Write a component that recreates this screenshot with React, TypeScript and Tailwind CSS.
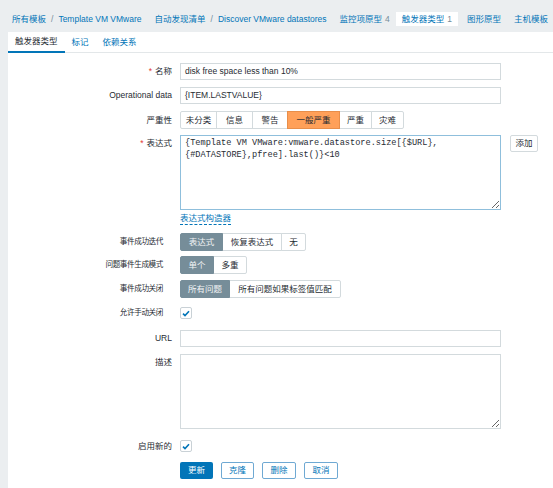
import React from 'react';

const FONT = { fontFamily: '"Liberation Sans", Arial, "Noto Sans CJK SC", sans-serif' };

const Check = () => (
  <div className="w-[12px] h-[12px] border border-[#c9d1d6] rounded-[2px] bg-white flex items-center justify-center">
    <svg width="8" height="7" viewBox="0 0 8 7">
      <path d="M1 3.6 L3 5.6 L7 1.2" fill="none" stroke="#0275b8" strokeWidth="1.6" />
    </svg>
  </div>
);

interface Seg {
  label: string;
  w: string;
}

const Segmented = ({ items, active, orange }: { items: Seg[]; active: number; orange?: boolean }) => (
  <div className="flex h-[18px]">
    {items.map((it, i) => {
      const on = i === active;
      let cls = 'bg-white text-[#1f2c33] border-[#d3dadd]';
      if (on && orange) cls = 'bg-[#ffa059] text-[#1f2c33] border-[#e88e4a] relative z-10';
      else if (on) cls = 'bg-[#768d99] text-[#f2f4f5] border-[#768d99] relative z-10';
      return (
        <div
          key={it.label}
          className={`${it.w} ${cls} border flex items-center justify-center leading-none ${i > 0 ? '-ml-px' : ''} ${i === 0 ? 'rounded-l-[2px]' : ''} ${i === items.length - 1 ? 'rounded-r-[2px]' : ''}`}
        >
          {it.label}
        </div>
      );
    })}
  </div>
);

const Row = ({
  label,
  req,
  narrow,
  className,
  top,
  children,
}: {
  label: string;
  req?: boolean;
  narrow?: boolean;
  className?: string;
  top?: boolean;
  children: React.ReactNode;
}) => (
  <div className={`flex ${top ? 'items-start' : 'items-center'} ${className || ''}`}>
    <div
      className={`w-[164px] shrink-0 text-right leading-none text-[#1f2c33] ${narrow ? 'pr-[9px] text-[7.6px] tracking-[-0.4px]' : ''} ${top ? 'pt-[4px]' : ''}`}
    >
      {req && <span className="text-[#e33734] mr-[3px]">*</span>}
      {label}
    </div>
    <div className="ml-[8px] flex items-start">{children}</div>
  </div>
);

const inputCls =
  'w-[321px] h-[17px] border border-[#d3dadd] bg-white px-[4px] flex items-center leading-none text-[#1f2c33]';

export default function App() {
  return (
    <div className="w-[553px] h-[488px] overflow-hidden bg-[#ebeef0] text-[8.5px] flex flex-col" style={FONT}>
      {/* breadcrumbs */}
      <div className="flex items-center pt-[12px] pl-[6px] h-[26px] whitespace-nowrap">
        <div className="px-[6px] h-[14px] flex items-center">
          <span className="text-[#0275b8]">所有模板</span>
          <span className="text-[#768d99] mx-[5px]">/</span>
          <span className="text-[#0275b8]">Template VM VMware</span>
        </div>
        <div className="pl-[7px] pr-[6px] h-[14px] flex items-center">
          <span className="text-[#0275b8]">自动发现清单</span>
          <span className="text-[#768d99] mx-[5px]">/</span>
          <span className="text-[#0275b8]">Discover VMware datastores</span>
        </div>
        <div className="pl-[7px] pr-[6px] h-[14px] flex items-center">
          <span className="text-[#0275b8]">监控项原型</span>
          <span className="text-[#768d99] ml-[3px]">4</span>
        </div>
        <div className="px-[6px] h-[14px] flex items-center bg-white">
          <span className="text-[#0275b8]">触发器类型</span>
          <span className="text-[#768d99] ml-[3px]">1</span>
        </div>
        <div className="pl-[9px] pr-[6px] h-[14px] flex items-center">
          <span className="text-[#0275b8]">图形原型</span>
        </div>
        <div className="pl-[7px] h-[14px] flex items-center">
          <span className="text-[#0275b8]">主机模板</span>
        </div>
      </div>

      {/* panel */}
      <div className="mt-[6px] ml-[8px] flex-1 bg-white flex flex-col">
        <div className="flex h-[21px] border-b border-[#e3e7e9]">
          <div className="px-[7px] flex items-center border-b-2 border-[#0275b8] text-[#1f2c33] -mb-px">触发器类型</div>
          <div className="px-[7px] flex items-center text-[#0275b8]">标记</div>
          <div className="px-[7px] flex items-center text-[#0275b8]">依赖关系</div>
        </div>

        <div className="flex flex-col">
          <Row label="名称" req className="mt-[10px]">
            <div className={inputCls}>disk free space less than 10%</div>
          </Row>
          <Row label="Operational data" className="mt-[7px]">
            <div className={inputCls}>{'{ITEM.LASTVALUE}'}</div>
          </Row>
          <Row label="严重性" className="mt-[7px]">
            <Segmented
              orange
              active={3}
              items={[
                { label: '未分类', w: 'w-[37px]' },
                { label: '信息', w: 'w-[37px]' },
                { label: '警告', w: 'w-[36px]' },
                { label: '一般严重', w: 'w-[53px]' },
                { label: '严重', w: 'w-[33px]' },
                { label: '灾难', w: 'w-[33px]' },
              ]}
            />
          </Row>
          <Row label="表达式" req top className="mt-[6px]">
            <textarea
              readOnly
              value={'{Template VM VMware:vmware.datastore.size[{$URL},\n{#DATASTORE},pfree].last()}<10'}
              className="w-[321px] h-[75px] border border-[#8fbfdc] px-[4px] py-[1px] text-[8.6px] leading-[12px] text-[#1f2c33] outline-none"
              style={{ fontFamily: '"Liberation Mono", "Courier New", monospace' }}
            />
            <div className="ml-[9px] w-[28px] h-[17px] border border-[#d3dadd] rounded-[2px] flex items-center justify-center text-[#1f2c33] leading-none">
              添加
            </div>
          </Row>
          <div className="flex mt-[3px]">
            <div className="ml-[172px] text-[#0275b8] leading-[11px] border-b border-dashed border-[#0275b8]">表达式构造器</div>
          </div>
          <Row label="事件成功迭代" narrow className="mt-[8px]">
            <Segmented
              active={0}
              items={[
                { label: '表达式', w: 'w-[43px]' },
                { label: '恢复表达式', w: 'w-[60px]' },
                { label: '无', w: 'w-[25px]' },
              ]}
            />
          </Row>
          <Row label="问题事件生成模式" narrow className="mt-[5px]">
            <Segmented
              active={0}
              items={[
                { label: '单个', w: 'w-[34px]' },
                { label: '多重', w: 'w-[34px]' },
              ]}
            />
          </Row>
          <Row label="事件成功关闭" narrow className="mt-[6px]">
            <Segmented
              active={0}
              items={[
                { label: '所有问题', w: 'w-[50px]' },
                { label: '所有问题如果标签值匹配', w: 'w-[112px]' },
              ]}
            />
          </Row>
          <Row label="允许手动关闭" narrow className="mt-[9px]">
            <Check />
          </Row>
          <Row label="URL" className="mt-[11px]">
            <div className={inputCls}></div>
          </Row>
          <Row label="描述" top className="mt-[7px]">
            <textarea
              readOnly
              value=""
              className="w-[321px] h-[75px] border border-[#d3dadd] outline-none"
            />
          </Row>
          <Row label="启用新的" className="mt-[11px]">
            <Check />
          </Row>
          <div className="flex mt-[10px] ml-[172px] gap-[8px]">
            <div className="w-[33px] h-[17px] bg-[#0275b8] text-white flex items-center justify-center leading-none rounded-[2px]">更新</div>
            <div className="w-[33px] h-[17px] border border-[#6fa9d3] text-[#0275b8] flex items-center justify-center leading-none rounded-[2px]">克隆</div>
            <div className="w-[34px] h-[17px] border border-[#6fa9d3] text-[#0275b8] flex items-center justify-center leading-none rounded-[2px]">删除</div>
            <div className="w-[34px] h-[17px] border border-[#6fa9d3] text-[#0275b8] flex items-center justify-center leading-none rounded-[2px]">取消</div>
          </div>
        </div>
      </div>
    </div>
  );
}
